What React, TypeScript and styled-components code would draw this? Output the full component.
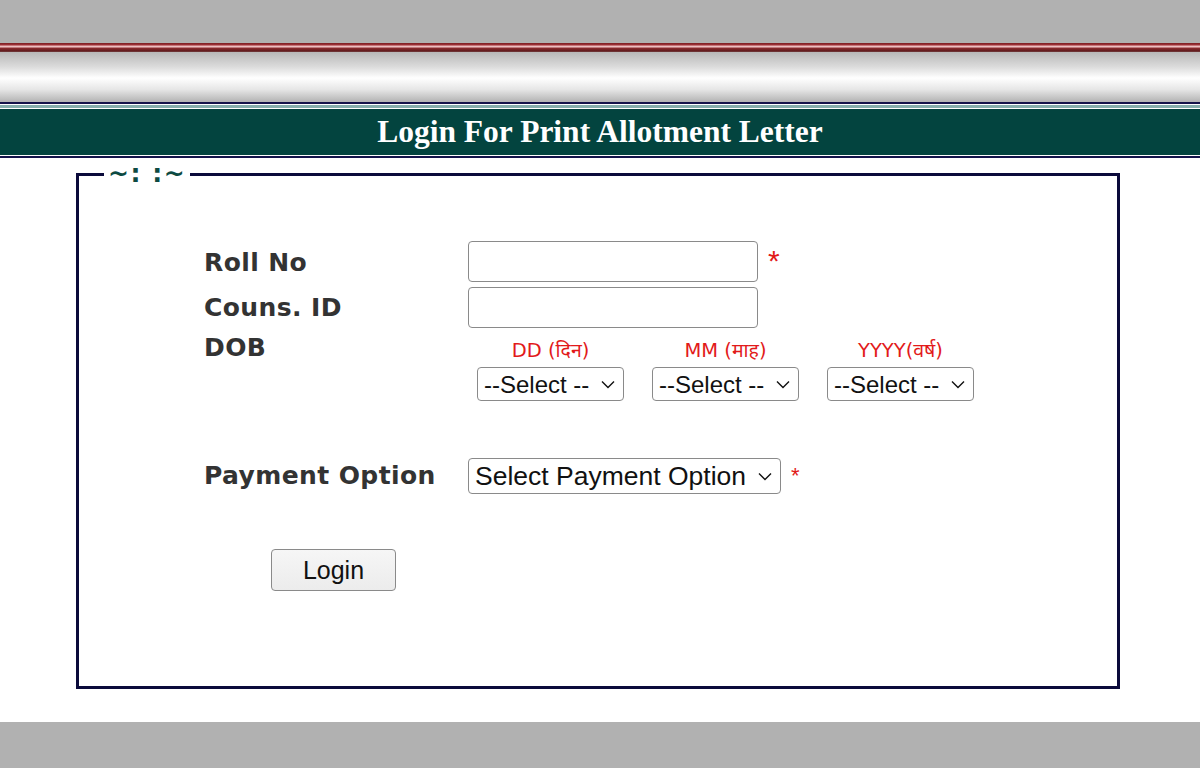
import styled, { createGlobalStyle } from 'styled-components';

const GlobalStyle = createGlobalStyle`
    html, body {
        margin: 0;
        padding: 0;
        background: #ffffff;
    }
    body {
        width: 1200px;
        height: 768px;
        overflow: hidden;
        font-family: "DejaVu Sans", Verdana, sans-serif;
    }
`;

const Page = styled.div`
    display: flex;
    flex-direction: column;
    width: 1200px;
    height: 768px;
`;

const TopGray = styled.div`
    height: 43px;
    background: #b1b1b1;
`;

const RedStripe = styled.div`
    height: 9px;
    background: linear-gradient(
        to bottom,
        #7a1e22 0px,
        #a3333a 2px,
        #e9b3b6 3px,
        #f2c9cb 4px,
        #8d2a2f 5px,
        #5e1a1c 8px,
        #7a4a4a 9px
    );
`;

const SilverBar = styled.div`
    height: 50px;
    background: linear-gradient(
        to bottom,
        #b7b7b7 0%,
        #dcdcdc 30%,
        #ffffff 52%,
        #e6e6e6 75%,
        #b3b3b3 100%
    );
`;

const ThinLine = styled.div<{ $color: string; $h: number }>`
    height: ${p => p.$h}px;
    background: ${p => p.$color};
`;

const TitleBand = styled.div`
    height: 46px;
    background: #03443f;
    display: flex;
    align-items: center;
    justify-content: center;
`;

const TitleText = styled.h1`
    margin: 0;
    font-family: "Liberation Serif", "Times New Roman", serif;
    font-weight: bold;
    font-size: 31.5px;
    color: #ffffff;
`;

const Content = styled.main`
    flex: 1;
    background: #ffffff;
    padding: 11px 80px 0 76px;
`;

const Box = styled.fieldset`
    margin: 0;
    width: 1044px;
    height: 520px;
    box-sizing: border-box;
    border: 3px solid #0b0a3b;
    padding: 0 0 0 3px;
`;

const Legend = styled.legend`
    margin-left: 22px;
    padding: 0 4px;
    font-family: "DejaVu Sans", Verdana, sans-serif;
    font-weight: bold;
    font-size: 25px;
    line-height: 10px;
    color: #0d4a42;
    letter-spacing: 1.5px;
`;

const Inner = styled.div`
    padding: 62px 0 0 122px;
`;

const FormGrid = styled.div`
    display: grid;
    grid-template-columns: 264px auto;
    row-gap: 5px;
    align-items: start;
`;

const Label = styled.div<{ $top?: number }>`
    font-family: "DejaVu Sans", Verdana, sans-serif;
    font-weight: bold;
    font-size: 25px;
    letter-spacing: 0.4px;
    color: #333333;
    padding-top: ${p => p.$top ?? 0}px;
    white-space: nowrap;
`;

const FieldRow = styled.div`
    display: flex;
    align-items: flex-start;
    gap: 10px;
`;

const TextInput = styled.input`
    width: 290px;
    height: 41px;
    box-sizing: border-box;
    border: 1.5px solid #8a8a8a;
    border-radius: 4px;
    background: #ffffff;
    outline: none;
`;

const Star = styled.span<{ $size: number; $top: number }>`
    color: #e21a1a;
    font-family: "Liberation Sans", Arial, sans-serif;
    font-size: ${p => p.$size}px;
    line-height: ${p => p.$size}px;
    padding-top: ${p => p.$top}px;
`;

const DobRow = styled.div`
    display: flex;
    gap: 28px;
    padding-left: 9px;
    margin-top: 6px;
`;

const DobCol = styled.div`
    width: 147px;
    display: flex;
    flex-direction: column;
    align-items: center;
    gap: 4px;
`;

const DobCaption = styled.span`
    font-family: "DejaVu Sans", "Noto Sans", Verdana, sans-serif;
    font-size: 19.5px;
    color: #e21a1a;
    height: 24px;
    line-height: 24px;
    white-space: nowrap;
`;

const Select = styled.select<{ $w: number; $h: number; $fs: number }>`
    appearance: none;
    width: ${p => p.$w}px;
    height: ${p => p.$h}px;
    box-sizing: border-box;
    border: 1.5px solid #8a8a8a;
    border-radius: 4px;
    background-color: #ffffff;
    background-image: url("data:image/svg+xml,%3Csvg xmlns='http://www.w3.org/2000/svg' width='14' height='9' viewBox='0 0 14 9'%3E%3Cpath d='M1 1.5l6 6 6-6' fill='none' stroke='%23111' stroke-width='1.4'/%3E%3C/svg%3E");
    background-repeat: no-repeat;
    background-position: right 8px center;
    padding: 0 0 0 6px;
    font-family: "Liberation Sans", Arial, sans-serif;
    font-size: ${p => p.$fs}px;
    color: #111111;
    outline: none;
`;

const Spacer = styled.div<{ $h: number }>`
    height: ${p => p.$h}px;
`;

const LoginButton = styled.button`
    margin-left: 67px;
    width: 125px;
    height: 42px;
    box-sizing: border-box;
    border: 1.5px solid #8a8a8a;
    border-radius: 4px;
    background: linear-gradient(to bottom, #f6f6f6, #ececec);
    font-family: "Liberation Sans", Arial, sans-serif;
    font-size: 25px;
    color: #111111;
`;

const BottomGray = styled.div`
    height: 46px;
    background: #b1b1b1;
`;

const dobParts = ['DD (दिन)', 'MM (माह)', 'YYYY(वर्ष)'];

export default function App() {
    return (
        <>
            <GlobalStyle />
            <Page>
                <TopGray />
                <RedStripe />
                <SilverBar />
                <ThinLine $color="#14134a" $h={2} />
                <ThinLine $color="#ffffff" $h={1} />
                <ThinLine $color="#86afad" $h={3} />
                <ThinLine $color="#ffffff" $h={1} />
                <TitleBand>
                    <TitleText>Login For Print Allotment Letter</TitleText>
                </TitleBand>
                <ThinLine $color="#ffffff" $h={1} />
                <ThinLine $color="#14134a" $h={2} />
                <Content>
                    <Box>
                        <Legend>~: :~</Legend>
                        <Inner>
                            <FormGrid>
                                <Label $top={7}>Roll No</Label>
                                <FieldRow>
                                    <TextInput type="text" />
                                    <Star $size={30} $top={5}>*</Star>
                                </FieldRow>
                                <Label $top={6}>Couns. ID</Label>
                                <FieldRow>
                                    <TextInput type="text" />
                                </FieldRow>
                                <Label>DOB</Label>
                                <DobRow>
                                    {dobParts.map(caption => (
                                        <DobCol key={caption}>
                                            <DobCaption>{caption}</DobCaption>
                                            <Select $w={147} $h={34} $fs={24} defaultValue="">
                                                <option value="">--Select --</option>
                                            </Select>
                                        </DobCol>
                                    ))}
                                </DobRow>
                            </FormGrid>
                            <Spacer $h={57} />
                            <FormGrid>
                                <Label $top={3}>Payment Option</Label>
                                <FieldRow>
                                    <Select $w={313} $h={36} $fs={26.5} defaultValue="">
                                        <option value="">Select Payment Option</option>
                                    </Select>
                                    <Star $size={22} $top={7}>*</Star>
                                </FieldRow>
                            </FormGrid>
                            <Spacer $h={55} />
                            <LoginButton>Login</LoginButton>
                        </Inner>
                    </Box>
                </Content>
                <BottomGray />
            </Page>
        </>
    );
}
